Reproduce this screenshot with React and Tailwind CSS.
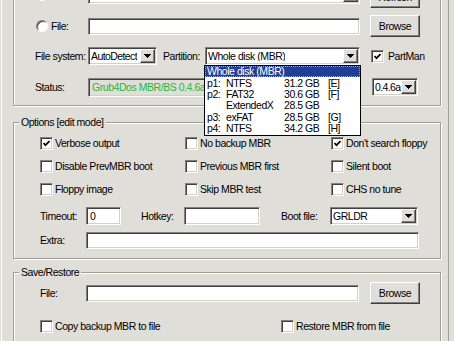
import React from 'react';

// classic win32 3d edges
const sunken =
  'border border-[#808080] border-r-white border-b-white shadow-[inset_1px_1px_0_#404040,inset_-1px_-1px_0_#d4d0c8]';
const raised =
  'border border-white border-r-[#404040] border-b-[#404040] shadow-[inset_-1px_-1px_0_#808080]';

const parts = [
  { id: 'p1:', fs: 'NTFS', size: '31.2 GB', drv: '[E]' },
  { id: 'p2:', fs: 'FAT32', size: '30.6 GB', drv: '[F]' },
  { id: '', fs: 'ExtendedX', size: '28.5 GB', drv: '' },
  { id: 'p3:', fs: 'exFAT', size: '28.5 GB', drv: '[G]' },
  { id: 'p4:', fs: 'NTFS', size: '34.2 GB', drv: '[H]' },
];

const Arrow = () => (
  <svg width="7" height="4" viewBox="0 0 7 4" shapeRendering="crispEdges">
    <path d="M0 0H7V1H6V2H5V3H4V4H3V3H2V2H1V1H0Z" fill="#000" />
  </svg>
);

const Combo = ({ text, className = '' }) => (
  <div className={`flex h-[18px] items-center justify-between bg-white pl-[2px] pr-[1px] ${sunken} ${className}`}>
    <span className="overflow-hidden whitespace-nowrap">{text}</span>
    <span className={`flex h-[14px] w-[15px] shrink-0 items-center justify-center bg-[#e0ded8] ${raised}`}>
      <Arrow />
    </span>
  </div>
);

const Field = ({ text, className = '' }) => (
  <div className={`flex items-center bg-white pl-[3px] ${sunken} ${className}`}>{text}</div>
);

const Button = ({ children, className = '' }) => (
  <div className={`flex h-[22px] w-[50px] items-center justify-center bg-[#e0ded8] ${raised} ${className}`}>
    {children}
  </div>
);

const Check = ({ on }) => (
  <span className={`flex h-[13px] w-[13px] shrink-0 items-center justify-center bg-white ${sunken}`}>
    {on && (
      <svg width="7" height="7" viewBox="0 0 7 7">
        <path d="M0.5 3 L2.5 5.2 L6.5 1" fill="none" stroke="#000" strokeWidth="1.7" />
      </svg>
    )}
  </span>
);

const CheckRow = ({ on, label }) => (
  <div className="flex h-[18px] items-center gap-[2px]">
    <Check on={on} />
    <span className="whitespace-nowrap">{label}</span>
  </div>
);

const Radio = () => (
  <span className="ml-[1px] h-[12px] w-[12px] shrink-0 rounded-full border border-[#808080] border-r-white border-b-white bg-white shadow-[inset_1px_1px_0_#404040]" />
);

const Group = ({ title, className = '', children }) => (
  <div className={`relative w-[428px] border border-[#a09d96] shadow-[inset_1px_1px_0_#fff,1px_1px_0_#fff] ${className}`}>
    {title && (
      <span className="absolute left-[5px] top-[-7px] bg-[#e0ded8] px-[2px] leading-[13px]">{title}</span>
    )}
    {children}
  </div>
);

export default function App() {
  return (
    <div className="h-[341px] w-[454px] overflow-hidden bg-[#e0ded8] font-['Liberation_Sans',Arial,sans-serif] text-[10.5px] leading-none tracking-[-0.45px] text-black">
      <div className="-mt-[24px] ml-[1px] h-[400px] w-[448px] border-l border-r border-l-white border-r-[#a09d96] pl-[11px]">
        {/* disk / file */}
        <Group className="pt-[9px] pb-[8px] pl-[21px]">
          <div className="flex h-[22px] items-start">
            <div className="flex h-[18px] w-[53px] items-center gap-[3px]">
              <Radio />
              <span>Disk:</span>
            </div>
            <Combo className="w-[272px]" text="hd1: HDD2 [F] MS VirtualController, 128 GB [E, F, G, H]" />
            <Button className="ml-[10px]">Refresh</Button>
          </div>

          <div className="mt-[7px] flex h-[22px] items-center">
            <div className="flex w-[53px] items-center gap-[3px]">
              <Radio />
              <span>File:</span>
            </div>
            <Field className="h-[17px] w-[272px]" />
            <Button className="ml-[10px]">Browse</Button>
          </div>

          <div className="mt-[10px] flex h-[18px] items-center">
            <span className="w-[53px] whitespace-nowrap">File system:</span>
            <Combo className="w-[69px] tracking-[-0.6px]" text="AutoDetect" />
            <span className="ml-[6px] w-[42px]">Partition:</span>
            <div className="relative z-10">
              <Combo className="w-[155px]" text="Whole disk (MBR)" />
              <div className="absolute left-[-1px] top-[18px] w-[157px] border border-black bg-white pb-[1px]">
                <div className="flex h-[11.3px] items-center bg-[#1f3f97] pl-[2px] text-white outline outline-1 -outline-offset-1 outline-dotted outline-[#9aa8d0]">
                  Whole disk (MBR)
                </div>
                {parts.map((p, i) => (
                  <div key={i} className="flex h-[11.3px] items-center pl-[2px] whitespace-nowrap">
                    <span className="w-[19px]">{p.id}</span>
                    <span className="w-[58px]">{p.fs}</span>
                    <span className="w-[32px] text-right">{p.size}</span>
                    <span className="ml-[12px]">{p.drv}</span>
                  </div>
                ))}
              </div>
            </div>
            <div className="ml-[11px] flex items-center gap-[4px]">
              <Check on />
              <span>PartMan</span>
            </div>
          </div>

          <div className="mt-[12px] flex h-[20px] items-center">
            <span className="w-[53px]">Status:</span>
            <div className={`flex h-[19px] w-[272px] items-center pl-[3px] text-[#1fb83a] ${sunken}`}>
              Grub4Dos MBR/BS 0.4.6a
            </div>
            <Combo className="ml-[12px] w-[46px] tracking-[-0.6px]" text="0.4.6a" />
          </div>
        </Group>

        {/* options */}
        <Group title="Options [edit mode]" className="mt-[16px] pt-[11px] pb-[9px] pl-[26px]">
          <div className="grid grid-cols-[145px_146px_auto] gap-y-[5px]">
            <CheckRow on label="Verbose output" />
            <CheckRow label="No backup MBR" />
            <CheckRow on label="Don't search floppy" />
            <CheckRow label="Disable PrevMBR boot" />
            <CheckRow label="Previous MBR first" />
            <CheckRow label="Silent boot" />
            <CheckRow label="Floppy image" />
            <CheckRow label="Skip MBR test" />
            <CheckRow label="CHS no tune" />
          </div>

          <div className="mt-[9px] flex h-[18px] items-center">
            <span className="w-[46px]">Timeout:</span>
            <Field className="h-[18px] w-[35px]" text="0" />
            <span className="ml-[20px] w-[43px]">Hotkey:</span>
            <Field className="h-[18px] w-[76px]" />
            <span className="ml-[21px] w-[49px] whitespace-nowrap">Boot file:</span>
            <Combo className="w-[88px]" text="GRLDR" />
          </div>

          <div className="mt-[6px] flex h-[18px] items-center">
            <span className="w-[46px]">Extra:</span>
            <Field className="h-[17px] w-[333px]" />
          </div>
        </Group>

        {/* save / restore */}
        <Group title="Save/Restore" className="mt-[13px] pt-[9px] pb-[12px] pl-[26px]">
          <div className="flex h-[22px] items-center">
            <span className="w-[46px]">File:</span>
            <Field className="h-[17px] w-[273px]" />
            <Button className="ml-[11px]">Browse</Button>
          </div>
          <div className="mt-[13px] grid grid-cols-[241px_auto]">
            <CheckRow label="Copy backup MBR to file" />
            <CheckRow label="Restore MBR from file" />
          </div>
        </Group>
      </div>
    </div>
  );
}
